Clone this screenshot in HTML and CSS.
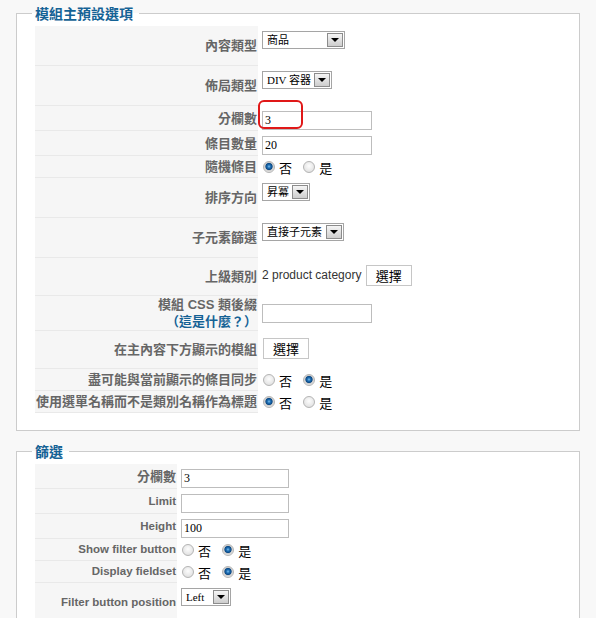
FILE: index.html
```html
<!DOCTYPE html>
<html lang="zh-Hant">

<head>
    <meta charset="UTF-8">
    <meta name="viewport" content="width=device-width, initial-scale=1.0">
    <title>模組參數</title>
    <link rel="stylesheet" href="styles.css">
</head>

<body>
    <div class="page">
        <fieldset class="panel">
            <legend>模組主預設選項</legend>
            <table class="paramlist main">
                <tr class="r-select">
                    <td class="key">內容類型</td>
                    <td class="value">
                        <span class="select select-type"><span class="select-label">商品</span><span class="select-arrow"></span></span>
                    </td>
                </tr>
                <tr class="r-select">
                    <td class="key">佈局類型</td>
                    <td class="value">
                        <span class="select select-layout"><span class="select-label">DIV 容器</span><span class="select-arrow"></span></span>
                    </td>
                </tr>
                <tr class="r-input">
                    <td class="key">分欄數</td>
                    <td class="value">
                        <input class="text" type="text" value="3">
                        <span class="mark"></span>
                    </td>
                </tr>
                <tr class="r-input">
                    <td class="key">條目數量</td>
                    <td class="value"><input class="text" type="text" value="20"></td>
                </tr>
                <tr class="r-radio">
                    <td class="key">隨機條目</td>
                    <td class="value">
                        <span class="radio on"></span><span class="opt">否</span>
                        <span class="radio"></span><span class="opt">是</span>
                    </td>
                </tr>
                <tr class="r-select">
                    <td class="key">排序方向</td>
                    <td class="value">
                        <span class="select select-order"><span class="select-label">昇冪</span><span class="select-arrow"></span></span>
                    </td>
                </tr>
                <tr class="r-select">
                    <td class="key">子元素篩選</td>
                    <td class="value">
                        <span class="select select-child"><span class="select-label">直接子元素</span><span class="select-arrow"></span></span>
                    </td>
                </tr>
                <tr class="r-button">
                    <td class="key">上級類別</td>
                    <td class="value">
                        <span class="picked">2 product category</span>
                        <button class="btn">選擇</button>
                    </td>
                </tr>
                <tr class="r-css">
                    <td class="key two-line">模組 CSS 類後綴<br><a href="#" class="help">（這是什麼？）</a></td>
                    <td class="value"><input class="text" type="text" value=""></td>
                </tr>
                <tr class="r-button">
                    <td class="key">在主內容下方顯示的模組</td>
                    <td class="value"><button class="btn">選擇</button></td>
                </tr>
                <tr class="r-radio">
                    <td class="key">盡可能與當前顯示的條目同步</td>
                    <td class="value">
                        <span class="radio"></span><span class="opt">否</span>
                        <span class="radio on"></span><span class="opt">是</span>
                    </td>
                </tr>
                <tr class="r-radio">
                    <td class="key">使用選單名稱而不是類別名稱作為標題</td>
                    <td class="value">
                        <span class="radio on"></span><span class="opt">否</span>
                        <span class="radio"></span><span class="opt">是</span>
                    </td>
                </tr>
            </table>
        </fieldset>

        <fieldset class="panel">
            <legend>篩選</legend>
            <table class="paramlist filter">
                <tr class="r-input">
                    <td class="key">分欄數</td>
                    <td class="value"><input class="text short" type="text" value="3"></td>
                </tr>
                <tr class="r-input">
                    <td class="key en">Limit</td>
                    <td class="value"><input class="text short" type="text" value=""></td>
                </tr>
                <tr class="r-input">
                    <td class="key en">Height</td>
                    <td class="value"><input class="text short" type="text" value="100"></td>
                </tr>
                <tr class="r-radio">
                    <td class="key en">Show filter button</td>
                    <td class="value">
                        <span class="radio"></span><span class="opt">否</span>
                        <span class="radio on"></span><span class="opt">是</span>
                    </td>
                </tr>
                <tr class="r-radio">
                    <td class="key en">Display fieldset</td>
                    <td class="value">
                        <span class="radio"></span><span class="opt">否</span>
                        <span class="radio on"></span><span class="opt">是</span>
                    </td>
                </tr>
                <tr class="r-select">
                    <td class="key en">Filter button position</td>
                    <td class="value">
                        <span class="select select-pos"><span class="select-label">Left</span><span class="select-arrow"></span></span>
                    </td>
                </tr>
            </table>
        </fieldset>
    </div>
</body>

</html>
```

FILE: styles.css
```css
body {
    margin: 0;
    background-color: #f8f8f8;
    font-family: 'Liberation Sans', 'Noto Sans CJK TC', sans-serif;
}

.page {
    padding: 4px 16px 0;
}

.panel {
    margin: 0 0 11px;
    padding: 4px 10px 17px 18px;
    border: 1px solid #ccc;
    background-color: white;
}

.panel legend {
    margin-left: -3px;
    padding: 0 6px 0 3px;
    color: #146295;
    font: bold 14px/18px 'Noto Sans CJK TC', sans-serif;
}

.paramlist {
    border-collapse: separate;
    border-spacing: 0;
}

.paramlist td {
    padding: 0;
}

.paramlist td.key {
    background-color: #f6f6f6;
    border-bottom: 1px solid #e9e9e9;
    text-align: right;
    vertical-align: middle;
    color: #666;
    font: bold 13px/17px 'Liberation Sans', 'Noto Sans CJK TC', sans-serif;
    white-space: nowrap;
    padding-right: 1px;
}

.paramlist td.key.en {
    font-size: 11.5px;
}

.main td.key {
    width: 222px;
}

.filter td.key {
    width: 141px;
}

.paramlist td.value {
    position: relative;
    padding: 5px 0 0 4px;
    vertical-align: top;
    font-size: 12px;
    color: #333;
    white-space: nowrap;
}

/* row heights follow the control in the value cell */
.r-select {
    height: 40px;
}

.r-input {
    height: 25px;
}

.r-radio {
    height: 22px;
}

.r-button {
    height: 38px;
}

.r-css {
    height: 34px;
}

.r-radio td.value,
.r-css td.value {
    vertical-align: middle;
    padding-top: 0;
}

.r-button td.value {
    padding-top: 7px;
}

.help {
    color: #146295;
    text-decoration: none;
}

/* text inputs */
.text {
    box-sizing: border-box;
    width: 110px;
    height: 19px;
    margin: 0;
    padding: 0 2px;
    border: 1px solid #bdbdbd;
    font: 12px 'Liberation Serif', serif;
    color: #000;
    vertical-align: top;
}

.text.short {
    width: 108px;
}

/* drop-downs */
.select {
    display: inline-flex;
    align-items: center;
    box-sizing: border-box;
    height: 18px;
    border: 1px solid #a5a5a5;
    background-color: white;
    font: 11px/16px 'Liberation Serif', 'Noto Sans CJK TC', serif;
    color: #000;
    vertical-align: top;
}

.select-label {
    flex: 1;
    overflow: hidden;
    padding-left: 4px;
}

.select-arrow {
    display: flex;
    flex: none;
    align-items: center;
    justify-content: center;
    box-sizing: border-box;
    width: 16px;
    height: 14px;
    margin-right: 1px;
    border: 1px solid #8c8c8c;
    background: linear-gradient(#f5f5f5, #cdcdcd);
}

.select-arrow::after {
    content: "";
    border-left: 4px solid transparent;
    border-right: 4px solid transparent;
    border-top: 4px solid #000;
}

.select-type {
    width: 83px;
}

.select-layout {
    width: 70px;
}

.select-order {
    width: 48px;
}

.select-child {
    width: 82px;
}

.select-pos {
    width: 50px;
}

/* radio buttons */
.radio {
    display: inline-block;
    box-sizing: border-box;
    width: 12px;
    height: 12px;
    margin: 0 4px 0 1px;
    border: 1px solid #b4b4b4;
    border-radius: 50%;
    background: radial-gradient(circle at 50% 40%, #fdfdfd 0, #e4e4e4 70%, #d2d2d2 100%);
    vertical-align: middle;
}

.radio.on {
    background: radial-gradient(circle at 50% 45%, #7cc0f0 0, #1f6fb4 1.6px, #0c4a86 3.2px, #c9c9c9 4px, #f2f2f2 6px);
}

.opt + .radio {
    margin-left: 8px;
}

.opt {
    font: 13px 'Noto Sans CJK TC', sans-serif;
    color: #000;
    vertical-align: middle;
}

.picked {
    display: inline-block;
    margin-top: 3px;
    vertical-align: top;
}

.btn {
    height: 21px;
    margin: 0 0 0 1px;
    padding: 0 9px;
    border: 1px solid #c6c6c6;
    background-color: white;
    font: 13px 'Noto Sans CJK TC', sans-serif;
    line-height: 17px;
    color: #000;
    vertical-align: top;
}

/* red highlight drawn around the column count field */
.mark {
    position: absolute;
    left: 0;
    top: -6px;
    width: 45px;
    height: 29px;
    box-sizing: border-box;
    border: 2px solid #e01818;
    border-radius: 6px;
}
```
